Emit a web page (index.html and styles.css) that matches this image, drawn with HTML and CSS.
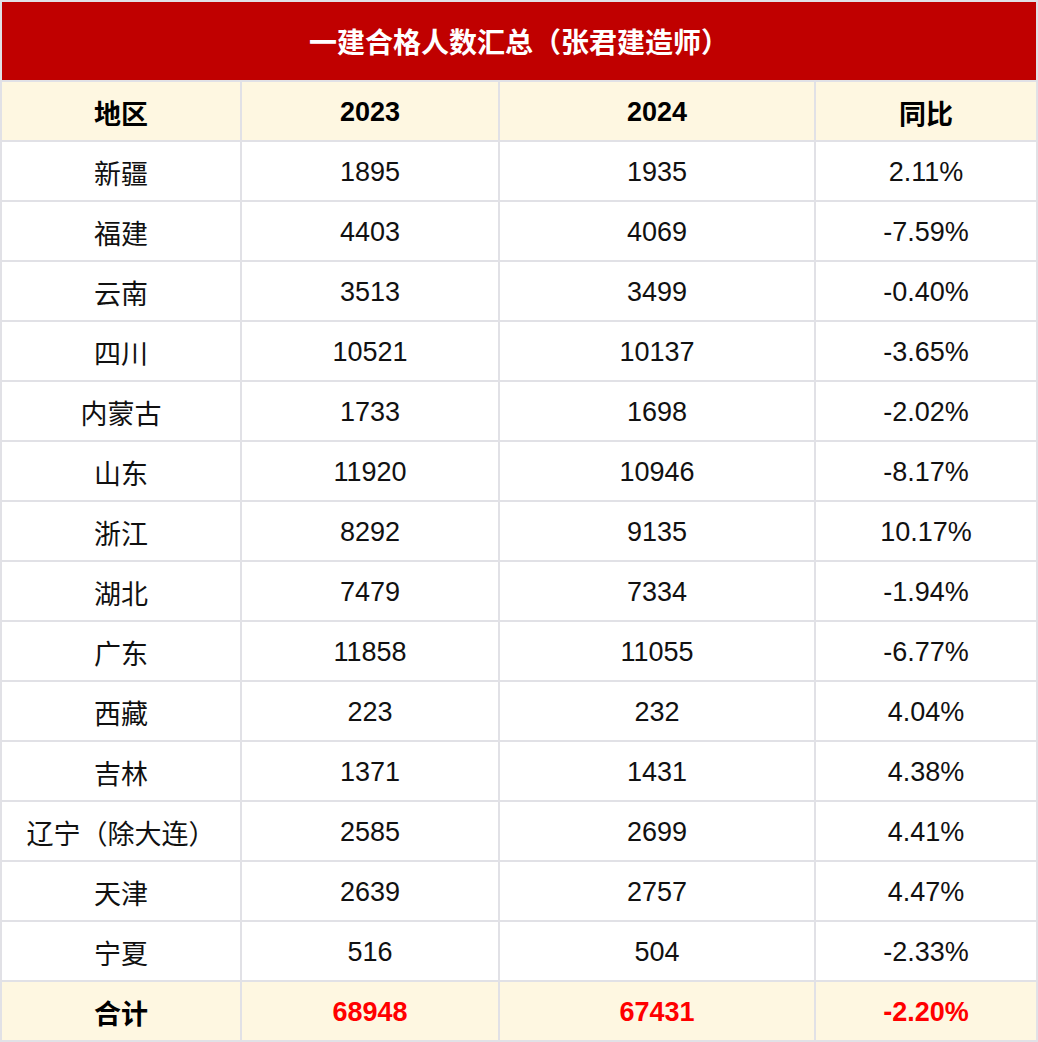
FILE: index.html
```html
<!DOCTYPE html>
<html lang="zh-CN">
<head>
<meta charset="utf-8">
<title>一建合格人数汇总</title>
<link rel="stylesheet" href="styles.css">
</head>
<body>
<div class="sheet">
  <div class="title">一建合格人数汇总（张君建造师）</div>
  <div class="cell head">地区</div><div class="cell head">2023</div><div class="cell head">2024</div><div class="cell head">同比</div>
  <div class="cell">新疆</div><div class="cell">1895</div><div class="cell">1935</div><div class="cell">2.11%</div>
  <div class="cell">福建</div><div class="cell">4403</div><div class="cell">4069</div><div class="cell">-7.59%</div>
  <div class="cell">云南</div><div class="cell">3513</div><div class="cell">3499</div><div class="cell">-0.40%</div>
  <div class="cell">四川</div><div class="cell">10521</div><div class="cell">10137</div><div class="cell">-3.65%</div>
  <div class="cell">内蒙古</div><div class="cell">1733</div><div class="cell">1698</div><div class="cell">-2.02%</div>
  <div class="cell">山东</div><div class="cell">11920</div><div class="cell">10946</div><div class="cell">-8.17%</div>
  <div class="cell">浙江</div><div class="cell">8292</div><div class="cell">9135</div><div class="cell">10.17%</div>
  <div class="cell">湖北</div><div class="cell">7479</div><div class="cell">7334</div><div class="cell">-1.94%</div>
  <div class="cell">广东</div><div class="cell">11858</div><div class="cell">11055</div><div class="cell">-6.77%</div>
  <div class="cell">西藏</div><div class="cell">223</div><div class="cell">232</div><div class="cell">4.04%</div>
  <div class="cell">吉林</div><div class="cell">1371</div><div class="cell">1431</div><div class="cell">4.38%</div>
  <div class="cell">辽宁（除大连）</div><div class="cell">2585</div><div class="cell">2699</div><div class="cell">4.41%</div>
  <div class="cell">天津</div><div class="cell">2639</div><div class="cell">2757</div><div class="cell">4.47%</div>
  <div class="cell">宁夏</div><div class="cell">516</div><div class="cell">504</div><div class="cell">-2.33%</div>
  <div class="cell head">合计</div><div class="cell head red">68948</div><div class="cell head red">67431</div><div class="cell head red">-2.20%</div>
</div>
</body>
</html>
```
FILE: styles.css
```css
html, body {
  margin: 0;
  padding: 0;
  background: #ffffff;
}
.sheet {
  display: grid;
  grid-template-columns: 238px 256px 314px 220px;
  grid-template-rows: 78px;
  grid-auto-rows: 58px;
  gap: 2px;
  padding: 2px;
  width: 1038px;
  box-sizing: border-box;
  background: #e1e1e6;
  font-family: "Liberation Sans", "Noto Sans CJK SC", sans-serif;
  font-size: 27px;
  color: #111111;
}
.title {
  grid-column: 1 / -1;
  background: #c00000;
  color: #ffffff;
  font-weight: bold;
  font-size: 28px;
  display: flex;
  align-items: center;
  justify-content: center;
}
.cell {
  background: #ffffff;
  display: flex;
  align-items: center;
  justify-content: center;
  white-space: nowrap;
  padding-top: 2px;
}
.head {
  background: #fef7e1;
  font-weight: bold;
  color: #000000;
}
.red {
  color: #ff0000;
}
```
